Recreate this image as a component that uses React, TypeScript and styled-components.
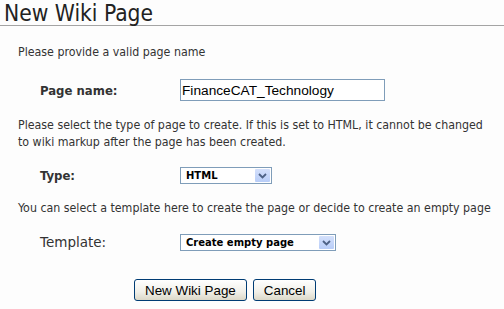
import styled, { createGlobalStyle } from "styled-components";

const GlobalStyle = createGlobalStyle`
    html, body {
        margin: 0;
        padding: 0;
        background: #fdfdfd;
    }
    body {
        font-family: "DejaVu Sans Condensed", "DejaVu Sans", sans-serif;
        color: #333;
    }
`;

const Page = styled.div`
    width: 504px;
    height: 309px;
    overflow: hidden;
`;

const Title = styled.h1`
    margin: 0;
    padding: 1px 4px 0;
    height: 24px;
    font-size: 22.6px;
    font-weight: normal;
    line-height: 24px;
    color: #222;
    border-bottom: 1px solid #a4a4a4;
`;

const Form = styled.form`
    display: flex;
    flex-direction: column;
    padding: 18px 0 0 18px;
`;

const Hint = styled.p<{ top?: number }>`
    margin: ${(p) => p.top || 0}px 0 0;
    font-size: 12.3px;
    line-height: 17px;
    color: #333;
    white-space: nowrap;
`;

const Field = styled.div<{ top: number }>`
    display: grid;
    grid-template-columns: 140px auto;
    align-items: center;
    padding-left: 22px;
    margin-top: ${(p) => p.top}px;
`;

const Label = styled.label<{ plain?: boolean }>`
    font-family: ${(p) => (p.plain ? '"DejaVu Sans"' : '"DejaVu Sans Condensed", "DejaVu Sans"')}, sans-serif;
    font-size: ${(p) => (p.plain ? 13.5 : 13)}px;
    line-height: 17px;
    font-weight: ${(p) => (p.plain ? "normal" : "bold")};
    color: #333;
`;

const TextBox = styled.input`
    width: 205px;
    height: 22px;
    box-sizing: border-box;
    margin: 0;
    padding: 1px 1px;
    border: 1px solid #7f9db9;
    background: #fff;
    font-family: "Liberation Sans", Arial, sans-serif;
    font-size: 13.7px;
    color: #000;
    outline: none;
`;

const SelectBox = styled.div<{ w: number }>`
    display: flex;
    align-items: center;
    width: ${(p) => p.w}px;
    height: 17px;
    box-sizing: border-box;
    border: 1px solid #7f9db9;
    background: #fff;
    padding: 1px;
`;

const SelectValue = styled.span`
    flex: 1;
    padding-left: 4px;
    font-family: "DejaVu Sans", sans-serif;
    font-size: 10px;
    font-weight: bold;
    color: #000;
    line-height: 13px;
`;

const ArrowButton = styled.span`
    display: flex;
    align-items: center;
    justify-content: center;
    width: 15px;
    height: 13px;
    background: linear-gradient(#d4e0fb, #b8cdf8);
    border-radius: 1px;
`;

const Actions = styled.div`
    display: flex;
    gap: 6px;
    padding-left: 116px;
    margin-top: 28px;
`;

const Button = styled.button`
    height: 22px;
    padding: 0 10px;
    border: 1px solid #003c74;
    border-radius: 3px;
    background: linear-gradient(#ffffff, #f0efe8 60%, #dcd8c8);
    font-family: "Liberation Sans", Arial, sans-serif;
    font-size: 13.4px;
    color: #000;
`;

function Arrow() {
    return (
        <svg width="9" height="6" viewBox="0 0 9 6">
            <path d="M1 1 L4.5 4.5 L8 1" fill="none" stroke="#4d6185" strokeWidth="1.8" />
        </svg>
    );
}

function Select({ value, width }: { value: string; width: number }) {
    return (
        <SelectBox w={width}>
            <SelectValue>{value}</SelectValue>
            <ArrowButton>
                <Arrow />
            </ArrowButton>
        </SelectBox>
    );
}

export default function App() {
    return (
        <Page>
            <GlobalStyle />
            <Title>New Wiki Page</Title>
            <Form onSubmit={(e) => e.preventDefault()}>
                <Hint>Please provide a valid page name</Hint>
                <Field top={18}>
                    <Label>Page name:</Label>
                    <TextBox defaultValue="FinanceCAT_Technology" />
                </Field>
                <Hint top={16}>
                    Please select the type of page to create. If this is set to HTML, it cannot be changed
                    <br />
                    to wiki markup after the page has been created.
                </Hint>
                <Field top={16}>
                    <Label>Type:</Label>
                    <Select value="HTML" width={92} />
                </Field>
                <Hint top={16}>You can select a template here to create the page or decide to create an empty page</Hint>
                <Field top={17}>
                    <Label plain>Template:</Label>
                    <Select value="Create empty page" width={156} />
                </Field>
                <Actions>
                    <Button type="submit">New Wiki Page</Button>
                    <Button type="button">Cancel</Button>
                </Actions>
            </Form>
        </Page>
    );
}
